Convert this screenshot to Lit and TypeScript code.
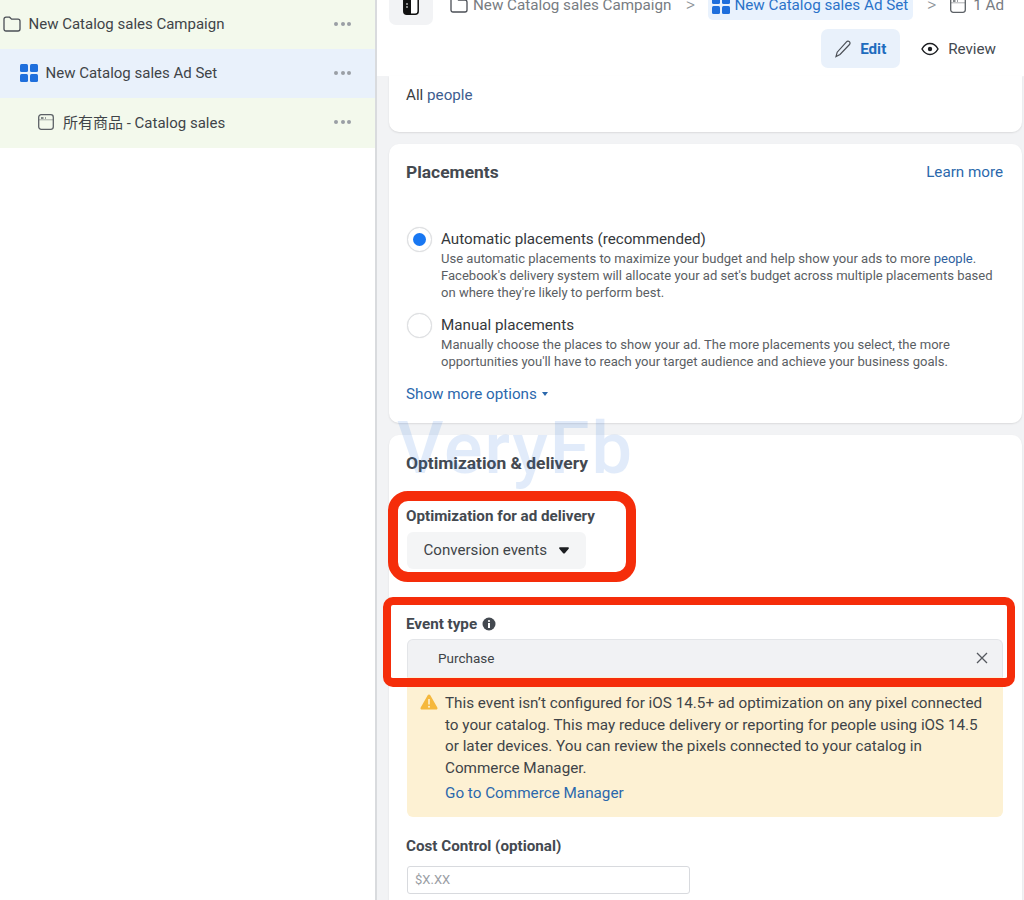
import { LitElement, html, css, svg } from "lit";
import { customElement } from "lit/decorators.js";

const folder = svg`<svg class="ic" width="18" height="16" viewBox="0 0 18 16" fill="none" stroke="#4b4f56" stroke-width="1.3"><path d="M1 3.2C1 2 1.8 1.2 3 1.2h3.6l2 2H15c1.2 0 2 .8 2 2V13c0 1.2-.8 2-2 2H3c-1.200 0-2-.8-2-2z"/></svg>`;
const grid = svg`<svg class="ic" width="18" height="18" viewBox="0 0 18 18" fill="#1f6fdc"><rect x="0" y="0" width="8" height="8" rx="1.500"/><rect x="10" y="0" width="8" height="8" rx="1.500"/><rect x="0" y="10" width="8" height="8" rx="1.500"/><rect x="10" y="10" width="8" height="8" rx="1.500"/></svg>`;
const ad = svg`<svg class="ic" width="16" height="16" viewBox="0 0 16 16" fill="none" stroke="#5c6166" stroke-width="1.300"><rect x=".7" y=".7" width="14.600" height="14.600" rx="2.500"/><path d="M3 4h2.500M7 4h.8"/><path d="M.7 5.800h14.600" stroke-width=".5"/></svg>`;
const dots = html`<span class="dots"><i></i><i></i><i></i></span>`;
const caretDown = svg`<svg width="10" height="7" viewBox="0 0 12 8" fill="#1c1e21"><path d="M1.200 0h9.600c1 0 1.500 1.100.8 1.900L7 7.200c-.5.600-1.500.600-2 0L.4 1.900C-.3 1.100.2 0 1.200 0z"/></svg>`;

@customElement("app-root")
export class AppRoot extends LitElement {
  static styles = css`
    :host { display: block; width: 1024px; height: 900px; overflow: hidden; background: #fff;
      font-family: Roboto, "Noto Sans CJK SC", sans-serif; color: #444950; }
    * { box-sizing: border-box; }
    a { color: #2b68ac; text-decoration: none; }
    .page { display: grid; grid-template-columns: 377px 1fr; height: 900px; }
    .side { border-right: 2px solid #d9dbde; background: #fff; }
    .row { display: flex; align-items: center; gap: 7.500px; height: 49.200px; padding-right: 24px; padding-bottom: 2px; font-size: 15px; background: #f3f9ec; color: #3f4448; }
    .row.sel { background: #e9f1fb; }
    .row.l0 { padding-left: 3px; }
    .row.l1 { padding-left: 20px; }
    .row.l2 { padding-left: 38px; gap: 9px; }
    .row .t { flex: 1; }
    .ic { flex: none; display: block; }
    .dots { display: flex; gap: 2.500px; }
    .dots i { width: 4px; height: 4px; border-radius: 50%; background: #9a9fa5; }

    .main { background: #f2f3f5; position: relative; overflow: hidden; }
    .head { height: 76px; background: #fff; overflow: hidden; }
    .crumbs { display: flex; align-items: flex-start; height: 35px; margin-top: -10px; padding-left: 12px; font-size: 15.200px; color: #777c82; white-space: nowrap; }
    .toggle { width: 44px; height: 35px; background: #f2f3f5; border-radius: 7px; display: flex; justify-content: center; align-items: flex-end; padding-bottom: 10px; margin-right: 17px; }
    .cr { display: flex; align-items: center; gap: 5px; height: 30px; }
    .sep { height: 30px; line-height: 30px; width: 38px; text-align: center; color: #8d9298; font-size: 18px; font-weight: 300; }
    .pill { background: #e9f2fd; border-radius: 5px; padding: 0 5px 0 4px; color: #2b72c9; gap: 4px; margin-left: -1px; }
    .sep2 { width: 37px; }
    .tabs { display: flex; justify-content: flex-end; align-items: center; height: 39px; margin-top: 4px; padding-right: 28px; font-size: 15.200px; }
    .edit { display: flex; align-items: center; gap: 8px; height: 39px; padding: 0 13px; width: 78.500px; background: #e9f1fb; border-radius: 7px; color: #1f6cbe; font-weight: 700; margin-right: 21.500px; }
    .review { display: flex; align-items: center; gap: 9px; color: #444950; }

    .cards { display: flex; flex-direction: column; gap: 12px; margin-left: 12px; width: 632.500px; }
    .card { background: #fff; border-radius: 10px; padding: 18px 18.500px 19px 17px; box-shadow: 0 1px 2px rgba(0,0,0,.1); position: relative; }
    .card.first { border-radius: 0 0 10px 10px; padding: 9px 17px 27px; height: 56px; font-size: 15.200px; line-height: 20px; color: #3a3d41; }
    .people { color: #3d5d8f; }
    .htop { display: flex; justify-content: space-between; align-items: center; height: 20px; }
    h2 { margin: 0; font-size: 17.400px; font-weight: 700; line-height: 20px; color: #444950; }
    .learn { font-size: 15.200px; }
    .opts { margin-top: 46.500px; display: flex; flex-direction: column; gap: 13.500px; }
    .opt { display: grid; grid-template-columns: 25px 1fr; column-gap: 9px; margin-left: 1px; }
    .radio { width: 25px; height: 25px; border-radius: 50%; border: 1.500px solid #dcdee1; background: #fff; display: flex; align-items: center; justify-content: center; margin-top: -1.500px; box-shadow: 0 0 1px rgba(0,0,0,.15); }
    .radio b { width: 13px; height: 13px; border-radius: 50%; background: #1877f2; }
    .ot { font-size: 15.200px; line-height: 20px; margin-bottom: 1px; color: #35383c; }
    .od { font-size: 13.050px; line-height: 17.300px; color: #5a5e63; white-space: nowrap; }
    .od a { color: #2f5f9e; }
    .more { display: flex; align-items: center; gap: 5px; margin-top: 13.500px; height: 20px; font-size: 15.200px; color: #2b68ac; }
    .more i { width: 0; height: 0; border: 3.500px solid transparent; border-top: 4px solid #2b68ac; border-bottom: 0; }

    .field { position: relative; }
    .ring { position: absolute; border-style: solid; border-color: #f52d0a; pointer-events: none; }
    .ring.a { left: -18.500px; top: -15px; width: 248.500px; height: 91px; border-width: 10.500px; border-radius: 20px; }
    .ring.b { left: -23px; top: -17px; width: 632px; height: 90px; border-width: 8px 8px 9px; border-radius: 10px; }
    label { display: flex; align-items: center; gap: 5px; height: 18px; padding-top: 2px; font-size: 15.200px; font-weight: 700; color: #444950; }
    .f1 { margin-top: 33px; }
    .select { display: flex; align-items: center; margin: 8px 0 0 1px; width: 179px; height: 37px; background: #f4f5f6; border-radius: 6px; padding-left: 16.500px; font-size: 15.100px; color: #3f4448; gap: 12px; }
    .f2 { margin-top: 45px; }
    .input { display: flex; align-items: center; justify-content: space-between; margin: 7px 0 0 1px; height: 38px; background: #f1f2f4; border: 1px solid #e3e5e8; border-bottom: 0; border-radius: 6px 6px 0 0; padding: 0 14px 0 30px; font-size: 13.500px; color: #3f4448; }
    .warn { display: grid; grid-template-columns: 16px 1fr; column-gap: 9px; margin-left: 1px; padding: 16px 10px 14px 13px; background: #fdf1d3; border-radius: 0 0 6px 6px; font-size: 15.250px; line-height: 21.600px; color: #3f4448; height: 140px; white-space: nowrap; }
    .warn a { display: block; margin-top: 3.500px; line-height: 20px; color: #2b68ac; }
    .warn svg { margin-top: 1px; }
    .f3 { margin-top: 19px; }
    .cost { margin: 12px 0 0 1px; width: 283px; height: 28px; background: #fff; border: 1px solid #d8dade; border-radius: 3px; padding-left: 7px; font-size: 13px; line-height: 26px; color: #9a9ea4; }
    .mark { position: absolute; left: 20px; top: 399px; font-size: 72px; line-height: 100px; font-weight: 500; color: #1f6fdc; opacity: .13; letter-spacing: 2px; pointer-events: none; white-space: nowrap; }
  `;

  render() {
    return html`<div class="page">
      <aside class="side">
        <div class="row l0">${folder}<span class="t">New Catalog sales Campaign</span>${dots}</div>
        <div class="row l1 sel">${grid}<span class="t">New Catalog sales Ad Set</span>${dots}</div>
        <div class="row l2">${ad}<span class="t">所有商品 - Catalog sales</span>${dots}</div>
      </aside>
      <main class="main">
        <div class="head">
          <div class="crumbs">
            <div class="toggle"><svg width="16" height="24" viewBox="0 0 16 24"><rect x=".8" y=".8" width="14.400" height="22.400" rx="3" fill="#fff" stroke="#111" stroke-width="1.500"/><path d="M3.800.8H8v22.400H3.800C2 23.200.8 22 .8 20.200V3.800C.8 2 2 .8 3.800.8z" fill="#111"/><path d="M3 13h2M3 16h2" stroke="#fff" stroke-width="1"/></svg></div>
            <div class="cr">${folder}<span>New Catalog sales Campaign</span></div>
            <span class="sep">&gt;</span>
            <div class="cr pill">${grid}<span>New Catalog sales Ad Set</span></div>
            <span class="sep sep2">&gt;</span>
            <div class="cr">${ad}<span style="margin-left:2px">1 Ad</span></div>
          </div>
          <div class="tabs">
            <div class="edit"><svg width="18" height="18" viewBox="0 0 18 18" fill="none" stroke="#4b4f56" stroke-width="1.200"><path d="M12.500 1.800a2 2 0 0 1 3 2.700L6 14.500l-4 2 1.200-4.300z"/></svg><span>Edit</span></div>
            <div class="review"><svg width="18" height="14" viewBox="0 0 18 14" fill="none" stroke="#1c1e21" stroke-width="1.500"><path d="M1 7c2-3.600 4.800-5.400 8-5.400S15 3.400 17 7c-2 3.600-4.800 5.400-8 5.400S3 10.600 1 7z"/><circle cx="9" cy="7" r="2.200" fill="#1c1e21" stroke="none"/></svg><span>Review</span></div>
          </div>
        </div>
        <div class="cards">
          <section class="card first">All <span class="people">people</span></section>
          <section class="card">
            <div class="htop"><h2>Placements</h2><a class="learn">Learn more</a></div>
            <div class="opts">
              <div class="opt"><span class="radio"><b></b></span><div><div class="ot">Automatic placements (recommended)</div><div class="od">Use automatic placements to maximize your budget and help show your ads to more <a>people</a>.<br>Facebook's delivery system will allocate your ad set's budget across multiple placements based<br>on where they're likely to perform best.</div></div></div>
              <div class="opt"><span class="radio"></span><div><div class="ot">Manual placements</div><div class="od">Manually choose the places to show your ad. The more placements you select, the more<br>opportunities you'll have to reach your target audience and achieve your business goals.</div></div></div>
            </div>
            <div class="more">Show more options <i></i></div>
          </section>
          <section class="card">
            <h2>Optimization &amp; delivery</h2>
            <div class="field f1">
              <label>Optimization for ad delivery</label>
              <div class="select"><span>Conversion events</span>${caretDown}</div>
              <div class="ring a"></div>
            </div>
            <div class="field f2">
              <label>Event type <svg width="14" height="14" viewBox="0 0 14 14"><circle cx="7" cy="7" r="6.500" fill="#444950"/><rect x="6" y="6" width="2" height="5" fill="#fff"/><circle cx="7" cy="4" r="1.100" fill="#fff"/></svg></label>
              <div class="input"><span>Purchase</span><svg width="12" height="12" viewBox="0 0 12 12" stroke="#55595e" stroke-width="1.300"><path d="M1 1l10 10M11 1L1 11"/></svg></div>
              <div class="ring b"></div>
            </div>
            <div class="warn"><svg width="18" height="16" viewBox="0 0 18 16"><path d="M7.700 1.200c.6-1 2-1 2.600 0l7 12.200c.6 1-.1 2.200-1.300 2.200H2c-1.200 0-1.900-1.200-1.300-2.200z" fill="#f5b83d"/><rect x="8.200" y="5" width="1.600" height="5.500" fill="#fdf1d3"/><circle cx="9" cy="12.700" r="1" fill="#fdf1d3"/></svg>
              <div>This event isn’t configured for iOS 14.5+ ad optimization on any pixel connected<br>to your catalog. This may reduce delivery or reporting for people using iOS 14.5<br>or later devices. You can review the pixels connected to your catalog in<br>Commerce Manager.<a>Go to Commerce Manager</a></div></div>
            <div class="field f3">
              <label>Cost Control (optional)</label>
              <div class="cost">$X.XX</div>
            </div>
          </section>
        </div>
        <div class="mark">VeryFb</div>
      </main>
    </div>`;
  }
}
